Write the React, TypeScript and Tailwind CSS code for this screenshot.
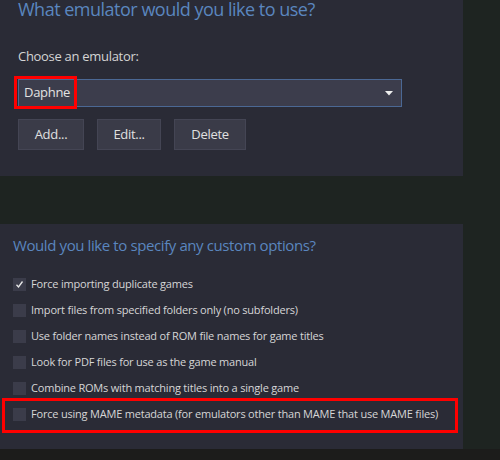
import React from 'react';

const options = [
  { label: 'Force importing duplicate games', checked: true },
  { label: 'Import files from specified folders only (no subfolders)', checked: false },
  { label: 'Use folder names instead of ROM file names for game titles', checked: false },
  { label: 'Look for PDF files for use as the game manual', checked: false },
  { label: 'Combine ROMs with matching titles into a single game', checked: false },
];

const Check: React.FC<{ checked?: boolean }> = ({ checked }) => (
  <div className="w-[13px] h-[13px] bg-[#3b3c4a] flex items-center justify-center shrink-0">
    {checked && (
      <svg width="9" height="9" viewBox="0 0 9 9">
        <path d="M1.5 4.8 L3.5 7 L7.5 1.5" stroke="#e8e8e8" strokeWidth="1.3" fill="none" />
      </svg>
    )}
  </div>
);

const OptionRow: React.FC<{ label: string; checked?: boolean }> = ({ label, checked }) => (
  <div className="flex items-center gap-[5px] h-[26px]">
    <Check checked={checked} />
    <span className="text-[11px] tracking-[-0.2px] text-[#d6d6d6] whitespace-nowrap">{label}</span>
  </div>
);

const btn = 'h-[31px] bg-[#3a3b48] border border-[#444554] text-[13px] tracking-[-0.3px] text-[#e0e0e0]';

export default function App() {
  return (
    <div
      className="w-[500px] h-[460px] overflow-hidden bg-[#1e2421] flex flex-col"
      style={{ fontFamily: '"Open Sans", "Noto Sans", sans-serif' }}
    >
      {/* emulator picker */}
      <div className="w-[463px] h-[176px] bg-[#2a2b36] pl-[18px] shrink-0">
        <div className="text-[18px] leading-[19px] tracking-[-0.5px] text-[#5a86bf] whitespace-nowrap">
          What emulator would you like to use?
        </div>
        <div className="mt-[28px] text-[13px] leading-[18px] tracking-[-0.3px] text-[#d4d4d4]">Choose an emulator:</div>
        <div className="relative mt-[14px] w-[384px] h-[28px] bg-[#3c3d4c] border border-[#4b6894] flex items-center justify-between pl-[5px] pr-[8px]">
          <span className="text-[13px] tracking-[-0.3px] text-[#e2e2e2]">Daphne</span>
          <svg width="8" height="5" viewBox="0 0 8 5">
            <path d="M0 0 H8 L4 4.5 Z" fill="#eeeeee" />
          </svg>
          <div className="absolute left-[-5px] top-[-4px] w-[63px] h-[33px] border-[3px] border-[#ff0000]" />
        </div>
        <div className="flex gap-[13px] mt-[12px]">
          <button className={`w-[66px] ${btn}`}>Add...</button>
          <button className={`w-[64px] ${btn}`}>Edit...</button>
          <button className={`w-[72px] ${btn}`}>Delete</button>
        </div>
      </div>

      <div className="h-[48px] shrink-0" />

      {/* custom options */}
      <div className="w-[463px] h-[225px] bg-[#2a2b36] pl-[13px] pt-[10px] shrink-0">
        <div className="text-[15px] leading-[22px] tracking-[-0.4px] text-[#5a86bf]">Would you like to specify any custom options?</div>
        <div className="mt-[15px] flex flex-col">
          {options.map((o) => (
            <OptionRow key={o.label} label={o.label} checked={o.checked} />
          ))}
          <div className="relative">
            <OptionRow label="Force using MAME metadata (for emulators other than MAME that use MAME files)" />
            <div className="absolute left-[-11px] top-[-3px] w-[456px] h-[35px] border-[3px] border-[#ff0000]" />
          </div>
        </div>
      </div>

      <div className="flex-1 bg-[#1c1c1b]" />
    </div>
  );
}
